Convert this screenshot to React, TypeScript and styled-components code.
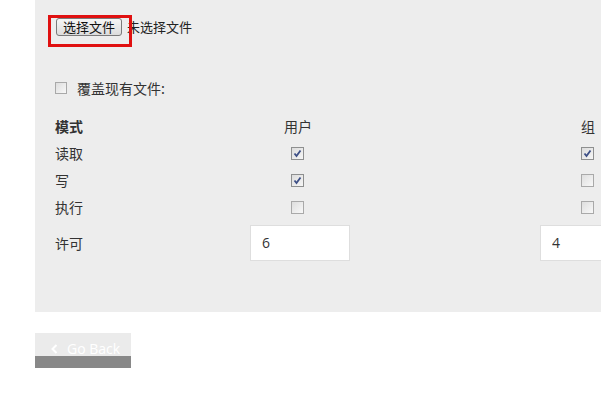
import React from 'react'
import styled, { createGlobalStyle } from 'styled-components'

const GlobalStyle = createGlobalStyle`
  html, body {
    margin: 0;
    padding: 0;
    background: #fff;
    overflow: hidden;
  }
  body {
    font-family: "Noto Sans CJK SC", "Liberation Sans", sans-serif;
    color: #333;
  }
`

type Perm = { label: string; user: boolean; group: boolean }

const perms: Perm[] = [
  { label: '读取', user: true, group: true },
  { label: '写', user: true, group: false },
  { label: '执行', user: false, group: false },
]

const App = () => {
  return (
    <Page>
      <GlobalStyle />
      <Panel>
        <FileRow>
          <FileButton type="button">选择文件</FileButton>
          <FileStatus>未选择文件</FileStatus>
          <Highlight />
        </FileRow>

        <OverwriteRow>
          <Check $size={12} />
          <span>覆盖现有文件:</span>
        </OverwriteRow>

        <Table>
          <HeadLabel>模式</HeadLabel>
          <Cell>
            <HeadText>用户</HeadText>
          </Cell>
          <Cell>
            <HeadText>组</HeadText>
          </Cell>

          {perms.map((p) => (
            <React.Fragment key={p.label}>
              <Label>{p.label}</Label>
              <Cell>
                <CheckSlot>
                  <Check $checked={p.user} />
                </CheckSlot>
              </Cell>
              <Cell>
                <CheckSlot>
                  <Check $checked={p.group} />
                </CheckSlot>
              </Cell>
            </React.Fragment>
          ))}

          <InputLabel>许可</InputLabel>
          <InputCell>
            <ModeInput defaultValue="6" />
          </InputCell>
          <InputCell>
            <ModeInput defaultValue="4" />
          </InputCell>
        </Table>
      </Panel>

      <BackButton type="button">
        <svg width="7" height="10" viewBox="0 0 7 10">
          <polyline
            points="5.5,1 1.5,5 5.5,9"
            fill="none"
            stroke="#fff"
            strokeWidth="2"
          />
        </svg>
        <span>Go Back</span>
      </BackButton>
    </Page>
  )
}

const Check = ({ $checked, $size = 13 }: { $checked?: boolean; $size?: number }) => (
  <CheckBox $checked={$checked} $size={$size}>
    {$checked && (
      <svg width="9" height="9" viewBox="0 0 9 9">
        <path d="M1.5 4.5 L3.5 7 L7.5 1.5" fill="none" stroke="#3d4f86" strokeWidth="1.8" />
      </svg>
    )}
  </CheckBox>
)

const Page = styled.div`
  width: 601px;
  height: 400px;
  overflow: hidden;
`

const Panel = styled.div`
  margin-left: 35px;
  width: 640px;
  height: 312px;
  box-sizing: border-box;
  padding: 18px 0 0 20px;
  background: #ededed;
`

const FileRow = styled.div`
  position: relative;
  display: flex;
  align-items: center;
  height: 17px;
  font-size: 13px;
`

const FileButton = styled.button`
  margin: 0 0 0 1px;
  width: 66px;
  height: 18px;
  padding: 0;
  border: 1px solid #7a7a7a;
  border-radius: 3px;
  background: linear-gradient(#f6f6f6, #dcdcdc);
  font-family: "Noto Sans CJK SC", sans-serif;
  font-size: 13px;
  line-height: 14px;
  color: #111;
`

const FileStatus = styled.span`
  margin-left: 5px;
  color: #222;
`

const Highlight = styled.div`
  position: absolute;
  left: -7px;
  top: -3px;
  width: 78px;
  height: 26px;
  border: 3px solid #e01010;
`

const OverwriteRow = styled.div`
  display: flex;
  align-items: center;
  gap: 10px;
  margin-top: 46px;
  height: 14px;
  font-size: 14px;
`

const Table = styled.div`
  display: grid;
  grid-template-columns: 195px 290px 290px;
  grid-auto-rows: 27px;
  margin-top: 18px;
  font-size: 14px;
  line-height: 16px;
`

const Label = styled.div`
  display: flex;
  align-items: center;
  padding-bottom: 2px;
`

const HeadLabel = styled(Label)`
  font-weight: bold;
`

const Cell = styled.div`
  display: flex;
  align-items: center;
`

const HeadText = styled.div`
  width: 96px;
  text-align: center;
  padding-bottom: 2px;
`

const CheckSlot = styled.div`
  width: 94px;
  display: flex;
  justify-content: center;
`

const CheckBox = styled.span<{ $checked?: boolean; $size: number }>`
  box-sizing: border-box;
  width: ${(p) => p.$size}px;
  height: ${(p) => p.$size}px;
  display: inline-flex;
  align-items: center;
  justify-content: center;
  border: 1px solid ${(p) => (p.$checked ? '#8e8f8f' : '#a9a9a9')};
  background: ${(p) =>
    p.$checked
      ? 'linear-gradient(135deg, #dcdcdc, #f6f6f6)'
      : 'linear-gradient(135deg, #dedede, #f8f8f8)'};
`

const InputLabel = styled(Label)`
  height: 43px;
`

const InputCell = styled.div`
  display: flex;
  align-items: center;
  height: 43px;
`

const ModeInput = styled.input`
  box-sizing: border-box;
  width: 100px;
  height: 36px;
  padding: 0 11px;
  border: 1px solid #dedede;
  background: #fff;
  font-family: "Open Sans", "Liberation Sans", sans-serif;
  font-size: 14px;
  color: #333;
  outline: none;
`

const BackButton = styled.button`
  display: flex;
  align-items: center;
  gap: 9px;
  box-sizing: content-box;
  margin: 21px 0 0 35px;
  width: 80px;
  height: 14px;
  padding: 9px 0 0 16px;
  border: none;
  border-bottom: 12px solid #888;
  background: #ebebeb;
  color: #fff;
  font-family: "Open Sans", "Liberation Sans", sans-serif;
  font-size: 14px;
  line-height: 14px;
`

export default App
